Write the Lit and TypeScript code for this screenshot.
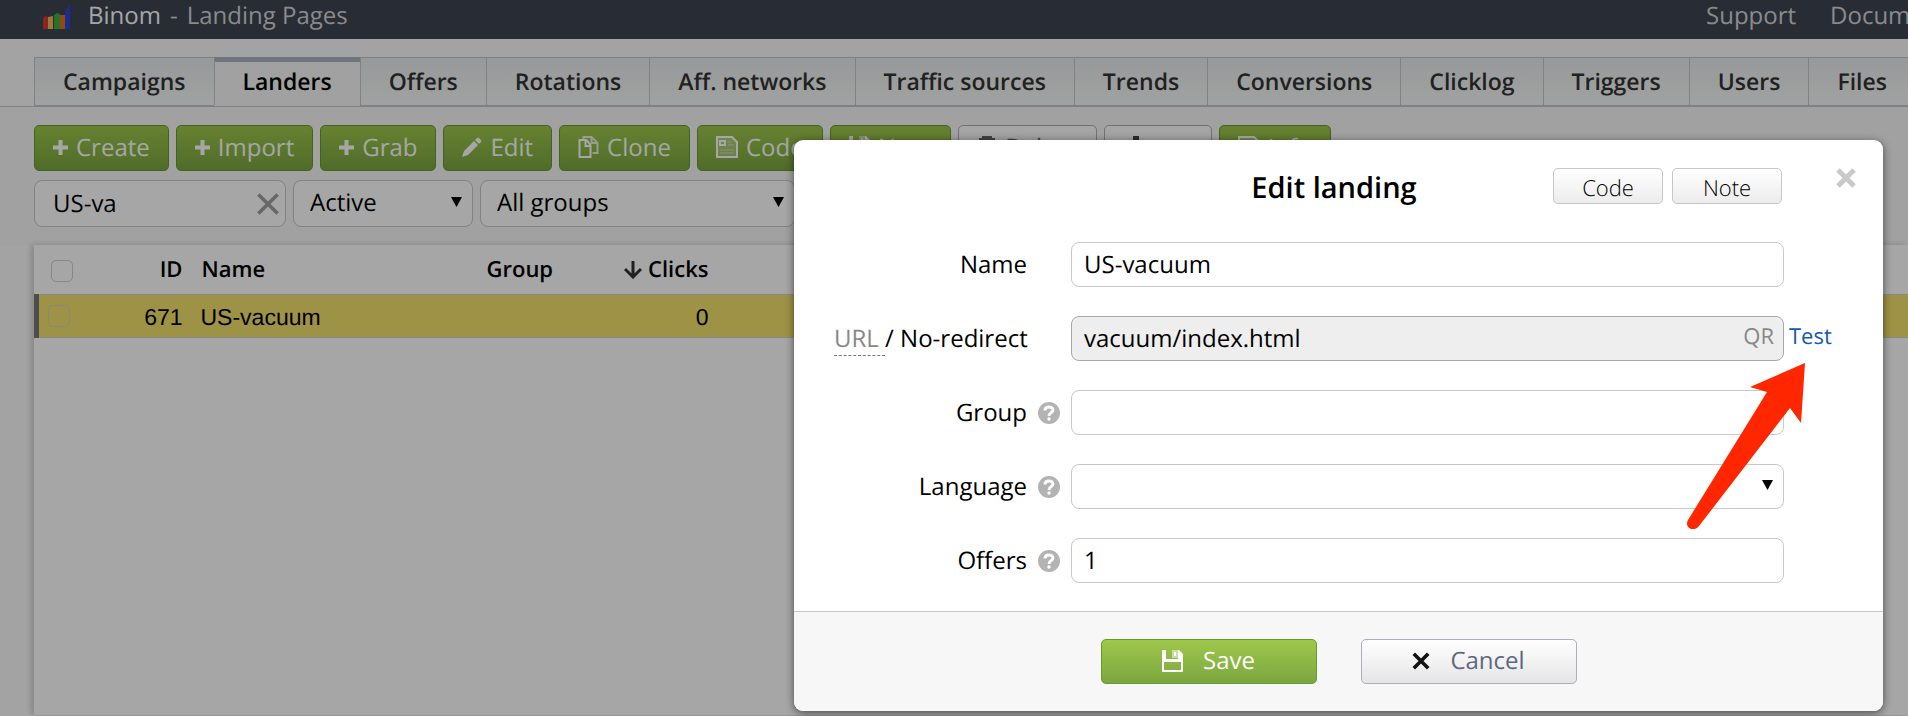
import { LitElement, html, css, svg, nothing } from "lit";
import { customElement } from "lit/decorators.js";
import { classMap } from "lit/directives/class-map.js";

const plusIcon = html`<svg width="15" height="15" viewBox="0 0 15 15" aria-hidden="true">
  <path d="M5.500 0h4v5.500H15v4H9.500V15h-4V9.500H0v-4h5.500z" fill="currentColor" /></svg>`;
const pencilIcon = html`<svg width="20" height="20" viewBox="0 0 20 20" aria-hidden="true">
  <path d="M0 20l2-6L12 4l4 4L6 18z M13 3l2-2q1-1 2 0l2 2q1 1 0 2L17 7z" fill="currentColor" /></svg>`;
const cloneIcon = html`<svg width="21" height="22" viewBox="0 0 20 22" aria-hidden="true" fill="none" stroke="currentColor" stroke-width="2">
  <path d="M1 4h7l4 5V21H1z M7 4v6H12" /><path d="M5 4V1h8l6 6v10h-5 M13 1v6H19" opacity=".8" /></svg>`;
const codeIcon = html`<svg width="22" height="22" viewBox="0 0 22 22" aria-hidden="true" fill="none" stroke="currentColor">
  <path d="M1 1h15l5 5v15H1z" stroke-width="2" fill="rgba(255, 255, 255, .25)" /><path d="M4 5h5v4H4z" stroke-width="2" />
  <path d="M12 6h3M12 9h6M4 14h14M4 17h14" opacity=".5" /></svg>`;
const diskIcon = html`<svg width="21" height="22" viewBox="0 0 21 22" aria-hidden="true">
  <path fill-rule="evenodd" fill="currentColor" d="M1 0h16L21 4V21q0 1-1 1H1q-1 0-1-1V1q0-1 1-1z M4 0v9h12V0z M2 12V20h17v-8z" />
  <path d="M10 0h6v8h-6z" fill="currentColor" opacity=".5" /><path d="M12 2h2v4H12z" fill="currentColor" /></svg>`;
const trashIcon = html`<svg width="20" height="22" viewBox="0 0 20 22" aria-hidden="true" fill="none" stroke="#666" stroke-width="2">
  <path d="M2 3h16M6 3V1h8v2M4 5l1 16h10l1-16M8 9v8M12 9v8" /></svg>`;
const downIcon = html`<svg width="22" height="22" viewBox="0 0 22 22" aria-hidden="true">
  <path d="M8 0h6v11h6l-9 9-9-9h6z" fill="#444" /></svg>`;
const crossIcon = (size: number, width: number) => html`<svg width=${size} height=${size} viewBox="0 0 20 20" aria-hidden="true">
  <path d="M2 2l16 16M18 2L2 18" fill="none" stroke="currentColor" stroke-width=${width} /></svg>`;
const caretIcon = html`<svg class="caret" width="11" height="10" viewBox="0 0 11 10" aria-hidden="true"><path d="M0 0h11L5.500 10z" /></svg>`;
const sortIcon = html`<svg width="18" height="18" viewBox="0 0 18 18" aria-hidden="true">
  <path d="M9 0v16M1 8l8 8 8-8" fill="none" stroke="#333" stroke-width="3" /></svg>`;
const logoIcon = html`<svg width="28" height="28" viewBox="0 0 28 28" aria-hidden="true">
  <path d="M0 18l2-3 3 1v12H0z" fill="#d93a30" /><path d="M5 16l5-1v13H5z" fill="#f5b565" />
  <path d="M11 14l3-2 3 1v15h-6z" fill="#3fae3c" /><path d="M17 14h5v14h-5z" fill="#e5701c" />
  <path d="M22 11c2-2 3-5 5-7v24h-5z" fill="#2b46e0" /></svg>`;

const TABS = ["Campaigns", "Landers", "Offers", "Rotations", "Aff. networks", "Traffic sources", "Trends",
  "Conversions", "Clicklog", "Triggers", "Users", "Files"];

const ACTIONS = [
  { label: "Create", icon: plusIcon },
  { label: "Import", icon: plusIcon },
  { label: "Grab", icon: plusIcon },
  { label: "Edit", icon: pencilIcon },
  { label: "Clone", icon: cloneIcon },
  { label: "Code", icon: codeIcon },
  { label: "Note", icon: diskIcon },
  { label: "Delete", icon: trashIcon, plain: true },
  { label: "csv", icon: downIcon, plain: true },
  { label: "Info", icon: codeIcon },
];

const shared = css`
  * { box-sizing: border-box; text-rendering: geometricPrecision; }
  button, input, select { font: inherit; color: inherit; margin: 0; }
  svg { display: block; flex: none; }
  a { color: inherit; text-decoration: none; }
  .btn {
    display: inline-flex; align-items: center; justify-content: center; gap: 8px;
    height: 46px; padding: 0 18px 2px; border: 1px solid #639c2c; border-radius: 5px; color: #fff;
    background: linear-gradient(#9ec84b, #7ba640); white-space: nowrap; flex: none;
  }
  .btn.plain { min-width: 108px; border-color: #a9afbb; color: #5d6880; background: linear-gradient(#fff, #e5e5e5); }
  .select { display: grid; align-items: center; }
  .select > * { grid-area: 1 / 1; }
  .select select { appearance: none; width: 100%; padding-bottom: 2px; }
  .caret { justify-self: end; margin: 0 11px 3px 0; pointer-events: none; }
`;

@customElement("tracker-page")
export class TrackerPage extends LitElement {
  static styles = [shared, css`
    :host { display: block; overflow: hidden; min-height: 100vh; background: #fbfbfb; }
    .top {
      display: flex; align-items: center; height: 39px; padding: 0 0 9px 43px;
      background: #3e4450; color: #d5d5d5; white-space: nowrap;
    }
    .brand { display: flex; gap: 9px; margin-left: 17px; }
    .brand b { font-weight: 400; color: #fff; }
    .links { display: flex; gap: 34px; margin-left: auto; width: 202px; overflow: hidden; }
    .tabs { display: flex; margin-top: 18px; padding-left: 34px; border-bottom: 1px solid #c3c7cf; overflow: hidden; }
    .tab {
      flex: none; height: 49px; padding: 0 28px; border: solid #c3c7cf; border-width: 1px 0 1px 1px;
      background: linear-gradient(#e9ebed, #f7f9f8); color: #333; font-size: 23px; font-weight: 600; line-height: 46px;
    }
    .tab:last-child { flex: 1 0 auto; }
    .tab.on { border-top: 5px solid #aab4c2; border-bottom-color: #f8f8f8; background: #f8f8f8; color: #000; line-height: 38px; }
    .tools { padding: 18px 0 18px 34px; background: #f7f7f7; }
    .actions, .filters { display: flex; gap: 7px; }
    .filters { margin-top: 9px; }
    .box { height: 47px; border: 1px solid #c8c8c8; border-radius: 8px; background: #fff; padding: 0 16px; }
    .search { display: flex; align-items: center; width: 252px; padding: 0 5px 0 18px; }
    .search input { flex: 1; min-width: 0; border: 0; padding: 0; background: none; }
    .clear { border: 0; padding: 0; background: none; color: #a0a0a0; }
    .status { width: 180px; }
    .group { width: 315px; }
    table {
      width: calc(100% - 34px); margin-left: 34px; border-collapse: collapse; table-layout: fixed;
      background: #fff; box-shadow: -3px 0 6px rgba(0, 0, 0, .18);
    }
    th { height: 49px; padding: 1px 0 0; font-size: 22px; font-weight: 600; text-align: left; }
    td { height: 43px; padding: 3px 0 0; background: #f3e16c; font: 23px "Liberation Sans", Arial, sans-serif; }
    tr { border-bottom: 1px solid #cfd1d8; }
    .tick { width: 54px; padding-left: 14px; }
    th.tick { padding-top: 3px; }
    td.tick { border-left: 5px solid #777; padding-left: 9px; padding-top: 0; }
    .tick input {
      display: block; appearance: none; width: 22px; height: 22px; border: 1px solid #cfcfcf; border-radius: 5px;
    }
    .id { width: 92px; text-align: right; }
    .name { width: 304px; padding-left: 19px; }
    td.name { padding-left: 18px; }
    .grp { width: 100px; }
    .clicks { width: 122px; text-align: right; }
    .sort { display: flex; gap: 6px; align-items: center; justify-content: flex-end; }
    tbody + tbody tr { border: 0; }
    .rest td { height: 378px; background: #fff; }
  `];

  render() {
    return html`
      <header class="top">
        ${logoIcon}
        <div class="brand"><b>Binom</b><span>-</span><span>Landing Pages</span></div>
        <nav class="links"><a href="#support">Support</a><a href="#docs">Documentation</a></nav>
      </header>
      <nav class="tabs">
        ${TABS.map((t) => html`<a href="#${t}" class=${classMap({ tab: true, on: t === "Landers" })}>${t}</a>`)}
      </nav>
      <section class="tools">
        <div class="actions">
          ${ACTIONS.map((a) => html`<button class=${classMap({ btn: true, plain: !!a.plain })}>${a.icon}${a.label}</button>`)}
        </div>
        <div class="filters">
          <div class="box search">
            <input type="text" aria-label="Search" .value=${"US-va"} />
            <button class="clear" aria-label="Clear">${crossIcon(24, 3)}</button>
          </div>
          <div class="select status"><select class="box" aria-label="Status"><option>Active</option></select>${caretIcon}</div>
          <div class="select group"><select class="box" aria-label="Group"><option>All groups</option></select>${caretIcon}</div>
        </div>
      </section>
      <table>
        <thead>
          <tr>
            <th class="tick"><input type="checkbox" aria-label="Select all" /></th>
            <th class="id">ID</th><th class="name">Name</th><th class="grp">Group</th>
            <th class="clicks"><span class="sort">${sortIcon}Clicks</span></th><th></th>
          </tr>
        </thead>
        <tbody>
          <tr>
            <td class="tick"><input type="checkbox" aria-label="Select 671" /></td>
            <td class="id">671</td><td class="name">US-vacuum</td><td></td><td class="clicks">0</td><td></td>
          </tr>
        </tbody>
        <tbody class="rest"><tr><td colspan="6"></td></tr></tbody>
      </table>
    `;
  }
}

@customElement("landing-dialog")
export class LandingDialog extends LitElement {
  static styles = [shared, css`
    :host {
      display: block; width: 100%; max-width: 1089px; border-radius: 9px; overflow: hidden; background: #fff;
      box-shadow: 0 2px 9px rgba(0, 0, 0, .55);
    }
    .head { display: grid; grid-template-columns: 1fr auto 1fr; align-items: center; padding: 28px 27px 38px 18px; }
    h1 { grid-column: 2; margin: 0; padding-top: 4px; font-size: 29px; line-height: 32px; font-weight: 600; }
    .side { display: flex; justify-content: flex-end; align-items: flex-start; gap: 9px; }
    .mini {
      width: 110px; height: 36px; padding: 4px 0 0; border: 1px solid #c6c6c6; border-radius: 5px;
      background: linear-gradient(#fff, #ececec); font-size: 22px; font-weight: 300; line-height: 30px; color: #000;
    }
    .close { border: 0; padding: 0; margin-left: 45px; background: none; color: #c9c9c9; }
    .form { display: grid; gap: 29px; padding: 0 52px 28px 40px; }
    .row {
      display: grid; grid-template-columns: 193px 22px minmax(0, 1fr) 42px; column-gap: 11px; align-items: center;
    }
    .label { text-align: right; white-space: nowrap; }
    .url { color: #888; border-bottom: 1px dashed #777; white-space: pre; }
    .field { grid-column: 3; margin-right: -6px; }
    .ctl { display: block; width: 100%; height: 45px; border: 1px solid #c9c9c9; border-radius: 8px; padding: 0 12px 1px; background: #fff; }
    .wrap { display: flex; align-items: center; padding-right: 9px; background: #eee; border-color: #a8a8a8; }
    .wrap input { flex: 1; min-width: 0; border: 0; padding: 0; background: none; }
    .small { font-size: 22px; line-height: 30px; padding-bottom: 5px; }
    .qr { color: #888; }
    .test { color: #1659b0; }
    .foot {
      display: flex; justify-content: center; gap: 44px; padding: 27px 0;
      border-top: 1px solid #c6c8cd; background: #f7f7f7;
    }
    .foot .btn { width: 216px; height: 45px; gap: 20px; }
    .foot .black { color: #111; }
  `];

  private help = html`<svg width="22" height="22" viewBox="0 0 22 22" role="img" aria-label="Help">
    <circle cx="11" cy="11" r="11" fill="#b3b3b3" />
    <path d="M7 8.500C7 4 15 4 15 8C15 11 11 10 11 14" fill="none" stroke="#fff" stroke-width="3" />
    <circle cx="11" cy="17" r="1.700" fill="#fff" /></svg>`;

  render() {
    return html`
      <div class="head">
        <h1>Edit landing</h1>
        <div class="side">
          <button class="mini">Code</button><button class="mini">Note</button>
          <button class="close" aria-label="Close">${crossIcon(20, 5)}</button>
        </div>
      </div>
      <div class="form">
        ${this.row("name", html`Name`, html`<input id="name" class="ctl" .value=${"US-vacuum"} />`, false)}
        ${this.row("url", html`<span class="url">URL </span>/ No-redirect`, html`<div class="ctl wrap">
            <input id="url" .value=${"vacuum/index.html"} /><a class="small qr" href="#qr">QR</a></div>`,
            false, html`<a class="small test" href="#test">Test</a>`)}
        ${this.row("group", html`Group`, html`<input id="group" class="ctl" />`)}
        ${this.row("lang", html`Language`, html`<div class="select">
            <select id="lang" class="ctl"><option></option></select>${caretIcon}</div>`)}
        ${this.row("offers", html`Offers`, html`<input id="offers" class="ctl" .value=${"1"} />`)}
      </div>
      <div class="foot">
        <button class="btn">${diskIcon}Save</button>
        <button class="btn plain"><span class="black">${crossIcon(18, 4)}</span>Cancel</button>
      </div>
    `;
  }

  private row(id: string, label: unknown, field: unknown, help = true, after: unknown = nothing) {
    return html`<div class="row">
      <label class="label" for=${id}>${label}</label>${help ? this.help : nothing}
      <div class="field">${field}</div>${after}
    </div>`;
  }
}

@customElement("app-root")
export class AppRoot extends LitElement {
  static styles = css`
    :host {
      display: block; position: relative; height: 100vh; overflow: hidden;
      font: 24px/33px "Open Sans", "Noto Sans", sans-serif; color: #000;
    }
    .overlay {
      position: absolute; inset: 0; display: flex; justify-content: flex-end; align-items: flex-start;
      padding: 140px 25px 0; background: rgba(0, 0, 0, .35);
    }
    .pointer { position: absolute; top: 363px; right: 102px; pointer-events: none; }
  `;

  render() {
    return html`
      <tracker-page></tracker-page>
      <div class="overlay"><landing-dialog role="dialog" aria-label="Edit landing"></landing-dialog></div>
      ${svg`<svg class="pointer" width="119" height="167" viewBox="0 0 119 167" aria-hidden="true">
        <path fill="#ff2600" d="M118 0L114 60L103 45L12 163C6 170 -3 164 1 157L80 29L63 24z" /></svg>`}
    `;
  }
}
